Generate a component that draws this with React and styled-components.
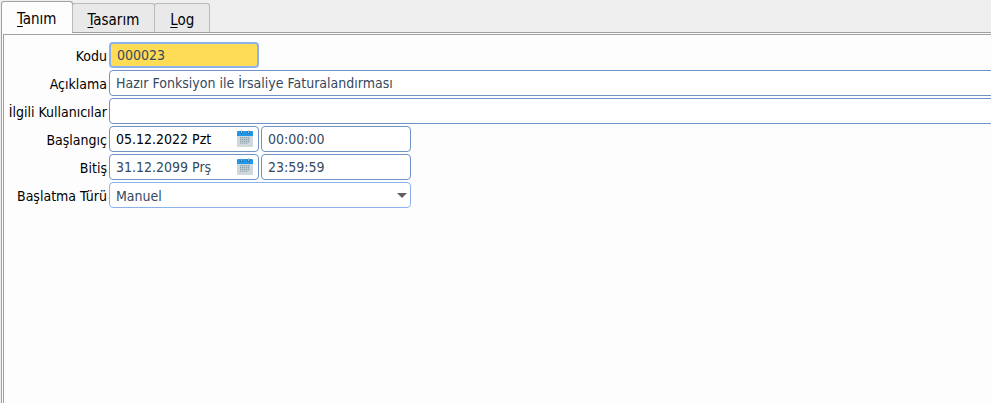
import React from 'react';
import styled, { createGlobalStyle } from 'styled-components';

const GlobalStyle = createGlobalStyle`
  * { box-sizing: border-box; }
  body {
    margin: 0;
    background: #efefef;
    color: #000;
    font: 14px/20px "DejaVu Sans Condensed", "DejaVu Sans", sans-serif;
  }
  input, select, button { font: inherit; color: inherit; }
`;

const Window = styled.div`
  display: flex;
  flex-direction: column;
  min-height: 100vh;
  padding: 1px 0 0 1px;
  overflow: hidden;
`;

const TabBar = styled.div`
  position: relative;
  display: flex;
  align-items: flex-end;
  height: 32px;
  margin-bottom: -1px;
`;

const Tab = styled.button`
  height: ${p => (p.$active ? 32 : 29)}px;
  margin: 0 0 ${p => (p.$active ? 0 : 1)}px ${p => (p.$active ? 0 : -1)}px;
  padding: ${p => (p.$active ? 2 : 3)}px 15px 0;
  font-size: 15px;
  border: 1px solid ${p => (p.$active ? '#a0a0a0' : '#b9b9b9')};
  border-bottom: 0;
  border-radius: 3px 3px 0 0;
  background: ${p => (p.$active ? '#fdfdfd' : '#e9e9e9')};
  &::first-letter { text-decoration: underline; text-underline-offset: 2px; }
`;

const Panel = styled.main`
  flex: 1;
  display: flex;
  padding: 1px 0 0 1px;
  border: 1px solid #a0a0a0;
  border-width: 1px 0 0 1px;
  background: #fdfdfd;
`;

const Form = styled.form`
  flex: 1;
  min-width: 0;
  display: flex;
  flex-direction: column;
  gap: 2px;
  padding: 7px 0 0;
  border: 1px solid #a0a0a0;
  border-width: 1px 0 0 1px;
`;

const Row = styled.div`
  display: grid;
  grid-template-columns: 103px minmax(0, 1fr);
  column-gap: 2px;
  align-items: center;
`;

const Label = styled.label`
  padding-top: 1px;
  text-align: right;
  white-space: nowrap;
`;

const Fields = styled.div`
  display: flex;
  gap: 2px;
`;

const Input = styled.input`
  display: block;
  width: ${p => (p.$wide ? 'calc(100% + 8px)' : '150px')};
  height: 26px;
  padding: 0 6px;
  border: 1px solid #6f93c7;
  border-radius: 4px;
  outline: 0;
  background: #fff;
  color: ${p => (p.$dark ? '#000' : '#34495e')};
`;

const CodeInput = styled(Input)`
  border: 2px solid #8cb2ee;
  background: #ffdc55;
`;

const DateBox = styled.div`
  position: relative;
  width: 150px;
`;

const CalendarButton = styled.button`
  position: absolute;
  top: 4px;
  right: 6px;
  width: 16px;
  height: 17px;
  padding: 0;
  border: 0;
  background: none;
  svg { display: block; }
`;

const SelectBox = styled.div`
  position: relative;
  width: 302px;
`;

const Select = styled.select`
  display: block;
  appearance: none;
  width: 100%;
  height: 26px;
  padding: 1px 20px 0 6px;
  border: 1px solid #8cb2ee;
  border-radius: 4px;
  background: #fff;
  color: #34495e;
`;

const Arrow = styled.svg`
  position: absolute;
  top: 11px;
  right: 4px;
  pointer-events: none;
`;

function CalendarIcon() {
  const columns = [3, 5, 7, 9, 11];
  const rows = [7, 9, 11];
  return (
    <svg width="16" height="17" viewBox="0 0 16 17" aria-hidden="true">
      <path d="M0 5h16v11q0 1-1 1H1q-1 0-1-1z" fill="#cfd8dc" />
      <path d="M0 6V2q0-1 1-1h14q1 0 1 1v4z" fill="#2196e9" />
      <circle cx="4.5" cy="2.5" r="1.5" fill="#2873ad" />
      <circle cx="11.5" cy="2.5" r="1.5" fill="#2873ad" />
      <path d="M4 0h1v3H4zM11 0h1v3h-1z" fill="#b0bec5" />
      {rows.map(y =>
        columns.map(x => (
          <rect key={`${x}-${y}`} x={x} y={y} width="1.4" height="1.4" fill="#90a4ae" />
        ))
      )}
      <path d="M3 13h1.4v1H3zM5 13h1.4v1H5zM7 13h1.4v1H7zM9 13h1.4v1H9z" fill="#a5b5be" />
    </svg>
  );
}

function DateField({ id, value, dark, label }) {
  return (
    <DateBox>
      <Input id={id} defaultValue={value} $dark={dark} />
      <CalendarButton type="button" aria-label={label}><CalendarIcon /></CalendarButton>
    </DateBox>
  );
}

export default function App() {
  return (
    <>
      <GlobalStyle />
      <Window>
        <TabBar role="tablist">
          <Tab role="tab" aria-selected="true" $active>Tanım</Tab>
          <Tab role="tab" aria-selected="false">Tasarım</Tab>
          <Tab role="tab" aria-selected="false">Log</Tab>
        </TabBar>
        <Panel>
          <Form>
            <Row>
              <Label htmlFor="code">Kodu</Label>
              <CodeInput id="code" defaultValue="000023" />
            </Row>
            <Row>
              <Label htmlFor="description">Açıklama</Label>
              <Input id="description" $wide defaultValue="Hazır Fonksiyon ile İrsaliye Faturalandırması" />
            </Row>
            <Row>
              <Label htmlFor="users">İlgili Kullanıcılar</Label>
              <Input id="users" $wide />
            </Row>
            <Row>
              <Label htmlFor="start">Başlangıç</Label>
              <Fields>
                <DateField id="start" value="05.12.2022 Pzt" dark label="Başlangıç tarihi seç" />
                <Input aria-label="Başlangıç saati" defaultValue="00:00:00" />
              </Fields>
            </Row>
            <Row>
              <Label htmlFor="end">Bitiş</Label>
              <Fields>
                <DateField id="end" value="31.12.2099 Prş" label="Bitiş tarihi seç" />
                <Input aria-label="Bitiş saati" defaultValue="23:59:59" />
              </Fields>
            </Row>
            <Row>
              <Label htmlFor="mode">Başlatma Türü</Label>
              <SelectBox>
                <Select id="mode" defaultValue="Manuel"><option>Manuel</option></Select>
                <Arrow width="10" height="5" viewBox="0 0 10 5" aria-hidden="true">
                  <path d="M0 0h10L5 5z" fill="#606060" />
                </Arrow>
              </SelectBox>
            </Row>
          </Form>
        </Panel>
      </Window>
    </>
  );
}
